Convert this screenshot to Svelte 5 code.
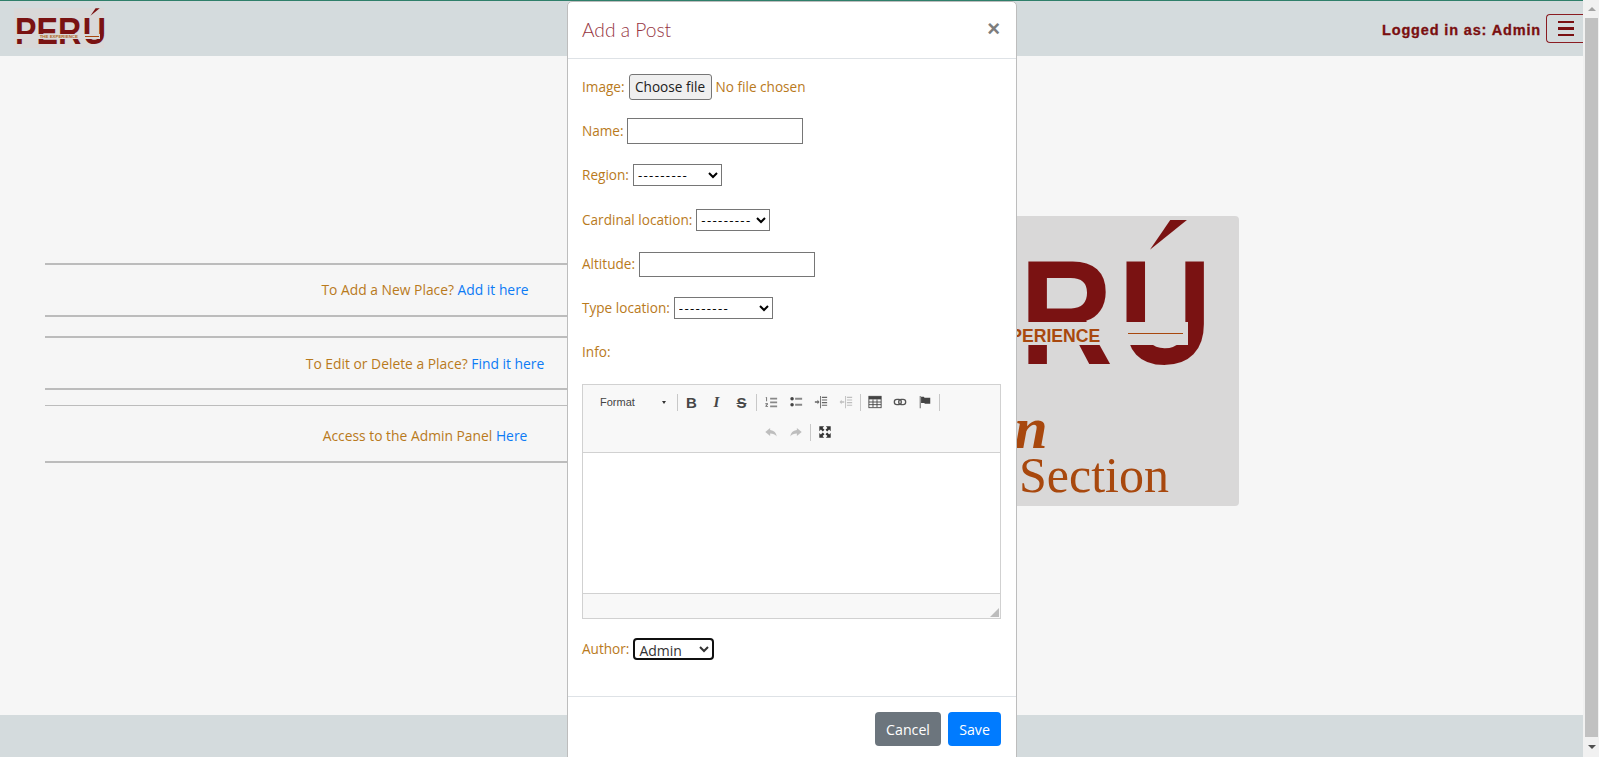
{#snippet logo(cls)}
  <div class="logo {cls}">
    <span class="word">PER<span class="last">Ú</span></span>
    <span class="accent"></span>
    <span class="band"><span class="tagline">THE EXPERIENCE</span><span class="rule"></span></span>
  </div>
{/snippet}

<div class="page">
  <div class="viewport">
    <header class="topbar">
      <div class="brand">{@render logo('small')}</div>
      <div class="account">
        <span class="logged">Logged in as: Admin</span>
        <button class="toggler" aria-label="Menu"><span></span><span></span><span></span></button>
      </div>
    </header>

    <main class="content">
      <section class="links">
        <div class="link-row first"><p>To Add a New Place? <a href="#a">Add it here</a></p></div>
        <div class="link-row second"><p>To Edit or Delete a Place? <a href="#b">Find it here</a></p></div>
        <div class="link-row third"><p>Access to the Admin Panel <a href="#c">Here</a></p></div>
      </section>
      <aside class="hero">
        {@render logo('big')}
        <div class="hero-admin">Admin</div>
        <div class="hero-section">Section</div>
      </aside>
    </main>

    <footer class="bottombar"></footer>
  </div>

  <div class="scrollbar">
    <div class="arrow up"></div>
    <div class="thumb"></div>
    <div class="arrow down"></div>
  </div>

  <div class="modal">
    <div class="modal-head">
      <h5>Add a Post</h5>
      <span class="close">×</span>
    </div>
    <form class="modal-body">
      <div class="field">
        <label for="f-img">Image:</label>
        <button type="button" id="f-img" class="file-btn">Choose file</button>
        <span class="nofile">No file chosen</span>
      </div>
      <div class="field"><label for="f-name">Name:</label><input id="f-name" class="i-name" type="text" /></div>
      <div class="field"><label for="f-region">Region:</label>
        <select id="f-region" class="dash s-region"><option>---------</option></select></div>
      <div class="field"><label for="f-card">Cardinal location:</label>
        <select id="f-card" class="dash s-card"><option>---------</option></select></div>
      <div class="field"><label for="f-alt">Altitude:</label><input id="f-alt" type="text" /></div>
      <div class="field"><label for="f-type">Type location:</label>
        <select id="f-type" class="dash s-type"><option>---------</option></select></div>
      <div class="field info"><label for="f-info">Info:</label></div>

      <div class="editor">
        <div class="toolbar">
          <div class="tool-row one">
            <span class="format">Format</span><span class="caret"></span>
            <span class="sep"></span>
            <span class="tool txt bold">B</span>
            <span class="tool txt ital">I</span>
            <span class="tool txt strike">S</span>
            <span class="sep"></span>
            <span class="tool"><svg viewBox="0 0 16 16"><path d="M7 3h8v2H7zM7 7.500h8v2H7zM7 12h8v2H7z" fill="#888"/><path d="M2 2.500h1.500V7H2.500V3.500H2zM1.500 9.500h3v1L3 12.500h1.600v1h-3v-1L3.200 10.500H1.500z" fill="#666"/></svg></span>
            <span class="tool"><svg viewBox="0 0 16 16"><path d="M7 3h8v2.400H7zM7 10h8v2.400H7z" fill="#888"/><circle cx="3.500" cy="4.200" r="2" fill="#444"/><circle cx="3.500" cy="11.200" r="2" fill="#444"/></svg></span>
            <span class="tool"><svg viewBox="0 0 16 16"><path d="M9 2h6v1.400H9zM9 5h6v1.400H9zM9 8h6v1.400H9zM9 11h6v1.400H9zM7 1h1v14H7zM1 7.200h3V5.500L6.300 8 4 10.500V8.800H1z" fill="#666"/></svg></span>
            <span class="tool faded"><svg viewBox="0 0 16 16"><path d="M9 2h6v1.400H9zM9 5h6v1.400H9zM9 8h6v1.400H9zM9 11h6v1.400H9zM7 1h1v14H7zM6 7.200H3V5.500L.7 8 3 10.500V8.800h3z" fill="#555"/></svg></span>
            <span class="sep"></span>
            <span class="tool"><svg viewBox="0 0 16 16"><rect x="1" y="1.500" width="14" height="13" fill="none" stroke="#444" stroke-width="1"/><rect x="1" y="1.500" width="14" height="3.500" fill="#444"/><path d="M5.700 5v9M10.300 5v9M1 8h14M1 11h14" stroke="#444" stroke-width="1"/></svg></span>
            <span class="tool"><svg viewBox="0 0 16 16"><rect x="1.500" y="5" width="8" height="6" rx="3" fill="none" stroke="#555" stroke-width="1.500"/><rect x="6.500" y="5" width="8" height="6" rx="3" fill="none" stroke="#555" stroke-width="1.500"/></svg></span>
            <span class="tool"><svg viewBox="0 0 16 16"><path d="M2 1h1v14H2z" fill="#555"/><path d="M3.500 2h3l1 1H14v7H8l-1-1H3.500z" fill="#444"/></svg></span>
            <span class="sep"></span>
          </div>
          <div class="tool-row two">
            <span class="tool faded"><svg viewBox="0 0 16 16"><path d="M7 3.500 1.500 8 7 12.500V9.700c3.400 0 5.600.8 7.500 3.300-.4-4-2.900-6.700-7.500-7.200z" fill="#555"/></svg></span>
            <span class="tool faded"><svg viewBox="0 0 16 16"><path d="M9 3.500 14.500 8 9 12.500V9.700c-3.400 0-5.600.8-7.500 3.300.4-4 2.900-6.700 7.500-7.200z" fill="#555"/></svg></span>
            <span class="sep"></span>
            <span class="tool"><svg viewBox="0 0 16 16"><path d="M1.500 1.500h5.500L5.200 3.300 7.400 5.500 5.500 7.400 3.300 5.200 1.500 7zM14.500 1.500V7L12.700 5.200 10.500 7.400 8.600 5.500 10.800 3.300 9 1.500zM1.500 14.500V9L3.300 10.800 5.500 8.600 7.400 10.500 5.200 12.700 7 14.500zM14.500 14.500H9L10.800 12.700 8.600 10.500 10.500 8.600 12.700 10.800 14.500 9z" fill="#333"/></svg></span>
          </div>
        </div>
        <div class="edit-area"></div>
        <div class="edit-foot"><span class="grip"></span></div>
      </div>

      <div class="field author"><label for="f-author">Author:</label>
        <select id="f-author" class="s-author"><option>Admin</option></select></div>
    </form>
    <div class="modal-foot">
      <button type="button" class="btn cancel">Cancel</button>
      <button type="button" class="btn save">Save</button>
    </div>
  </div>
</div>

<style>
  :global(body) { margin: 0; overflow: hidden; background: #f6f6f6; }
  * { box-sizing: border-box; }
  .page {
    position: relative; display: flex; width: 1599px; height: 757px; overflow: hidden;
    font-family: "Open Sans", "Noto Sans", sans-serif; font-size: 13.6px; color: #b97a1c;
  }
  .viewport { flex: 1; min-width: 0; display: flex; flex-direction: column; }

  .topbar {
    height: 56px; flex: none; background: #d4dbdd; border-top: 1px solid #2f7f6a;
    display: flex; justify-content: space-between;
  }
  .brand { margin: 7px 0 0 14px; width: 90px; height: 40px; background: #d9d8d8; padding: 6px 0 0 1px; }
  .account { display: flex; align-items: flex-start; }
  .logged {
    font-family: "Liberation Sans", Arial, sans-serif; font-weight: 700; font-size: 14.5px;
    letter-spacing: .85px; color: #7a0f10; margin: 19px 5px 0 0; line-height: 20px;
    -webkit-text-stroke: .3px #7a0f10;
  }
  .toggler {
    width: 37px; height: 29px; margin-top: 13px; padding: 0 0 0 11px; background: transparent;
    border: 1px solid #8a1c22; border-right: 0; border-radius: 4px 0 0 4px;
    display: flex; flex-direction: column; justify-content: center; gap: 4px;
  }
  .toggler span { display: block; width: 16px; height: 2.400px; background: #7a1012; }

  .content { flex: 1; min-height: 0; display: flex; align-items: flex-start; padding: 160px 0 0 45px; background: #f6f6f6; }
  .links { width: 760px; padding-top: 47px; flex: none; font-size: 13.85px; }
  .link-row { display: flex; align-items: center; justify-content: center; border-top: 2px solid #bcbcbc; border-bottom: 2px solid #bcbcbc; }
  .link-row p { margin: 0; }
  .link-row a { color: #0d7bf5; text-decoration: none; }
  .first { height: 54px; margin-bottom: 19px; padding-bottom: 2px; }
  .second { height: 54px; margin-bottom: 15px; }
  .third { height: 58px; border-top-width: 1px; padding-top: 3px; }

  .hero { width: 434px; height: 290px; flex: none; background: #d9d8d8; border-radius: 4px; padding: 27px 0 0 43px; overflow: hidden; }
  .hero-admin {
    font-family: "Liberation Serif", serif; font-style: italic; font-weight: 700; font-size: 60px;
    line-height: 44px; color: #a8480e; margin: 15px 0 0 33px;
  }
  .hero-section {
    font-family: "Liberation Serif", serif; font-size: 50px; line-height: 50px; color: #a8480e; margin: 0 0 0 171px;
  }

  .logo { position: relative; width: 2.45em; height: 1em; line-height: 1; color: #7a1212; }
  .logo.big { font-size: 148px; }
  .logo.small { font-size: 37px; }
  .word {
    display: block; font-family: "Liberation Sans", Arial, sans-serif; font-weight: 700;
    transform: scaleX(.87) translateY(-.03em); transform-origin: 0 0; white-space: nowrap;
    clip-path: inset(.11em -1em 0 0);
  }
  .last { margin-left: .047em; }
  .accent {
    position: absolute; left: 2.04em; top: -.155em; width: .25em; height: .2em;
    background: #7a1212; clip-path: polygon(55% 0, 100% 0, 0 100%);
  }
  .band {
    position: absolute; left: 0; top: .534em; width: 2.3em; height: .155em; background: #d9d8d8;
    display: flex; align-items: center;
  }
  .tagline {
    font-family: "Liberation Sans", Arial, sans-serif; font-weight: 700; font-size: .119em; color: #a8480e;
    margin: .4em 0 0 5.600em; white-space: nowrap;
  }
  .rule { width: .37em; height: 1px; background: #a8480e; margin-left: .19em; }
  .small .tagline { color: #b0661c; }

  .bottombar { height: 42px; flex: none; background: #d4dbdd; }

  .scrollbar { width: 16px; flex: none; background: #f1f1f1; display: flex; flex-direction: column; padding-left: 2px; }
  .thumb { flex: 1; background: #c1c1c1; margin-right: 1px; }
  .arrow { height: 18px; flex: none; display: flex; align-items: center; justify-content: center; padding-right: 1px; }
  .arrow::after { content: ""; width: 0; height: 0; border-left: 4px solid transparent; border-right: 4px solid transparent; }
  .up::after { border-bottom: 4px solid #a3a3a3; }
  .down { height: 20px; }
  .down::after { border-top: 4px solid #505050; }

  .modal {
    position: absolute; left: 567px; top: 1px; width: 450px; height: 770px; background: #fff;
    border: 1px solid #bdbdbd; border-radius: 5px 5px 0 0; display: flex; flex-direction: column;
  }
  .modal-head { height: 57px; flex: none; border-bottom: 1px solid #dee2e6; display: flex; justify-content: space-between; align-items: center; padding: 0 16px 2px 14px; }
  .modal-head h5 { margin: 0; font-family: Lato, sans-serif; font-weight: 300; font-size: 19.200px; color: #96353f; }
  .close { font-family: "Liberation Sans", Arial, sans-serif; font-weight: 700; font-size: 22px; color: #7d7d7d; line-height: 1; margin-top: -1px; }
  .modal-body { flex: none; height: 637px; padding: 5px 15px 0 14px; display: grid; grid-template-rows: 45px 44px 44px 45px 44px 44px 54px 234px auto; align-content: start; }
  .field { display: flex; align-items: center; gap: 4px; }
  .field label { line-height: 20px; }
  .info { align-items: flex-start; padding-top: 12px; }
  .file-btn {
    width: 83px; height: 26px; padding: 0; border: 1px solid #767676; border-radius: 3px; background: #efefef;
    font: inherit; color: #202020;
  }
  input[type="text"] { width: 176px; height: 25px; border: 1px solid #767676; background: #fff; padding: 1px 2px; border-radius: 0; }
  input.i-name[type="text"] { height: 26px; margin: -1px 0 0 -1px; }
  select { height: 22px; border: 1px solid #767676; border-radius: 0; background: #fff; font-family: "Open Sans", sans-serif; font-size: 13.3px; color: #000; padding: 0; }
  .dash { letter-spacing: 1.300px; }
  .s-region { width: 89px; margin-top: -1px; }
  .s-card { width: 74px; }
  .s-type { width: 99px; }
  .s-author { width: 81px; border: 2px solid #101010; border-radius: 4px; color: #333; font-size: 14px; }
  .author { margin-top: 20px; }

  .editor { display: flex; flex-direction: column; border: 1px solid #d1d1d1; height: 235px; }
  .toolbar { height: 68px; flex: none; background: #f8f8f8; border-bottom: 1px solid #d1d1d1; padding-top: 2px; }
  .tool-row { display: flex; align-items: center; height: 30px; }
  .tool-row.one { padding-left: 17px; }
  .tool-row.two { padding-left: 175px; }
  .format { font-family: "Liberation Sans", Arial, sans-serif; font-size: 11px; color: #444; width: 62px; }
  .caret { width: 0; height: 0; border-left: 2.500px solid transparent; border-right: 2.500px solid transparent; border-top: 3px solid #333; margin-right: 9px; }
  .sep { width: 1px; height: 17px; background: #c8c8c8; flex: none; margin: 0 1.500px; }
  .tool { width: 25px; height: 24px; flex: none; display: flex; align-items: center; justify-content: center; color: #474747; }
  .tool svg { width: 14px; height: 14px; display: block; }
  .faded { opacity: .35; }
  .txt { font-family: "Liberation Sans", Arial, sans-serif; font-size: 15px; }
  .bold { font-weight: 700; }
  .ital { font-family: "Liberation Serif", serif; font-style: italic; font-weight: 700; font-size: 15px; }
  .strike { font-weight: 700; text-decoration: line-through; }
  .edit-area { flex: 1; background: #fff; }
  .edit-foot { height: 25px; flex: none; background: #f8f8f8; border-top: 1px solid #d1d1d1; display: flex; justify-content: flex-end; align-items: flex-end; padding: 0 1px 1px 0; }
  .grip { width: 9px; height: 9px; background: #bcbcbc; clip-path: polygon(100% 0, 100% 100%, 0 100%); }

  .modal-foot { flex: none; height: 75px; border-top: 1px solid #dee2e6; display: flex; justify-content: flex-end; gap: 7px; padding: 15px 15px 0 0; }
  .btn { height: 34px; border: 0; border-radius: 4px; color: #fff; font-family: "Open Sans", sans-serif; font-size: 14.200px; padding: 0; }
  .cancel { width: 66px; background: #6c757d; }
  .save { width: 53px; background: #007bff; }
</style>
